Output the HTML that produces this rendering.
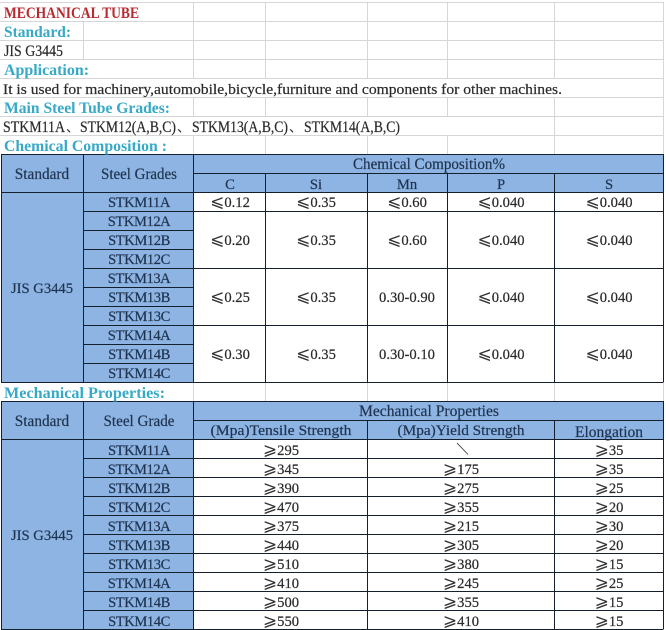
<!DOCTYPE html>
<html lang="en"><head><meta charset="utf-8"><title>Mechanical Tube</title>
<style>
html,body{margin:0;padding:0;background:#fff;width:666px;height:630px;overflow:hidden}
svg{display:block}
text{font-family:"Liberation Serif",serif;font-size:14.6px;fill:#2a2a2a;stroke:#2a2a2a;stroke-width:.2;filter:blur(.22px)}
.h{font-weight:bold;fill:#37a9c6;stroke:none;font-size:15.4px}
.r{font-weight:bold;fill:#b92a30;stroke:none;font-size:15.8px}
.c{text-anchor:middle;fill:#1f3350;stroke:#1f3350}
.k{letter-spacing:-.45px}
.w{font-size:15.3px}
.v{text-anchor:middle;fill:#2a2a2a}
.s{font-family:"DejaVu Sans",sans-serif;font-size:17px;stroke:none;fill:#333}
.j{font-family:"Noto Sans CJK SC",sans-serif;font-size:13px;stroke:none}
.g{stroke:#d6d6d6;stroke-width:1;fill:none}
.d{stroke:#14202e;stroke-width:1;fill:none}
</style></head><body>
<svg width="666" height="630" viewBox="0 0 666 630" xmlns="http://www.w3.org/2000/svg">
<rect width="666" height="630" fill="#fff"/>
<!-- light grid -->
<path class="g" d="M0 2.5H663M0 21.5H663M0 40.5H663M0 59.5H663M0 78.5H663M0 97.5H663M0 116.5H663M0 135.5H663
M83.5 21V59M193.5 2V78M193.5 97V116M193.5 135V154M265.5 2V78M265.5 97V116M265.5 135V154M367.5 2V78M367.5 97V116M367.5 135V154M447.5 2V78M447.5 97V116M447.5 135V154M554.5 2V78M554.5 97V154M663.5 2V154
M193.5 383V401M265.5 383V401M367.5 383V401M447.5 383V401M554.5 383V401M663.5 383V401"/>
<!-- fills -->
<rect x="1" y="154" width="662" height="38" fill="#8db4e2"/>
<rect x="1" y="192" width="192" height="190" fill="#8db4e2"/>
<rect x="1" y="401" width="662" height="38.5" fill="#8db4e2"/>
<rect x="1" y="439" width="192" height="190" fill="#8db4e2"/>
<!-- dark lines: chemical -->
<path class="d" d="M1 154.5H663.5M193 173.5H663.5M1 192.5H663.5M83 211.5H663.5M83 230.5H193M83 249.5H193M83 268.5H663.5M83 287.5H193M83 306.5H193M83 325.5H663.5M83 344.5H193M83 363.5H193M1 382.5H663.5
M1.5 154V382M83.5 154V382M193.5 154V382M265.5 173V382M367.5 173V382M447.5 173V382M554.5 173V382M663.5 154V382"/>
<!-- dark lines: mechanical -->
<path class="d" d="M1 401.5H663.5M193 420.5H663.5M1 439.5H663.5M83 458.5H663.5M83 477.5H663.5M83 496.5H663.5M83 515.5H663.5M83 534.5H663.5M83 553.5H663.5M83 572.5H663.5M83 591.5H663.5M83 610.5H663.5M1 629.5H663.5
M1.5 401V629M83.5 401V629M193.5 401V629M367.5 420V629M554.5 420V629M663.5 401V629"/>
<path d="M457 443L468 454.5" stroke="#333" stroke-width=".9" fill="none"/>
<!-- headings -->
<text class="r" x="4" y="18" textLength="135" lengthAdjust="spacingAndGlyphs">MECHANICAL TUBE</text>
<text class="h" x="4" y="37" textLength="67" lengthAdjust="spacingAndGlyphs">Standard:</text>
<text class="w" x="4" y="56" textLength="59" lengthAdjust="spacingAndGlyphs">JIS G3445</text>
<text class="h" x="4" y="75" textLength="85" lengthAdjust="spacingAndGlyphs">Application:</text>
<text x="3" y="94" textLength="559" lengthAdjust="spacingAndGlyphs">It is used for machinery,automobile,bicycle,furniture and components for other machines.</text>
<text class="h" x="4" y="113" textLength="166" lengthAdjust="spacingAndGlyphs">Main Steel Tube Grades:</text>
<text class="w" y="132"><tspan x="3" textLength="62" lengthAdjust="spacingAndGlyphs">STKM11A</tspan><tspan class="j" x="66">、</tspan><tspan x="80" textLength="96" lengthAdjust="spacingAndGlyphs">STKM12(A,B,C)</tspan><tspan class="j" x="177">、</tspan><tspan x="192" textLength="96" lengthAdjust="spacingAndGlyphs">STKM13(A,B,C)</tspan><tspan class="j" x="289">、</tspan><tspan x="304" textLength="96" lengthAdjust="spacingAndGlyphs">STKM14(A,B,C)</tspan></text>
<text class="h" x="4" y="151" textLength="163" lengthAdjust="spacingAndGlyphs">Chemical Composition :</text>
<text class="h" x="4" y="398" textLength="161" lengthAdjust="spacingAndGlyphs">Mechanical Properties:</text>
<!-- chemical headers -->
<text class="c w" x="42" y="179">Standard</text>
<text class="c w" x="139" y="179" textLength="76" lengthAdjust="spacingAndGlyphs">Steel Grades</text>
<text class="c w" x="429" y="169" textLength="152" lengthAdjust="spacingAndGlyphs">Chemical Composition%</text>
<text class="c" x="230" y="189">C</text>
<text class="c" x="316" y="189">Si</text>
<text class="c" x="407" y="189">Mn</text>
<text class="c" x="501" y="189">P</text>
<text class="c" x="609" y="189">S</text>
<text class="c" x="42" y="293">JIS G3445</text>
<!-- chemical grades -->
<text class="c k" x="139" y="207">STKM11A</text>
<text class="c k" x="139" y="226">STKM12A</text>
<text class="c k" x="139" y="245">STKM12B</text>
<text class="c k" x="139" y="264">STKM12C</text>
<text class="c k" x="139" y="283">STKM13A</text>
<text class="c k" x="139" y="302">STKM13B</text>
<text class="c k" x="139" y="321">STKM13C</text>
<text class="c k" x="139" y="340">STKM14A</text>
<text class="c k" x="139" y="359">STKM14B</text>
<text class="c k" x="139" y="378">STKM14C</text>
<!-- chemical values -->
<text class="v" x="230" y="207"><tspan class="s">⩽</tspan>0.12</text>
<text class="v" x="316" y="207"><tspan class="s">⩽</tspan>0.35</text>
<text class="v" x="407" y="207"><tspan class="s">⩽</tspan>0.60</text>
<text class="v" x="501" y="207"><tspan class="s">⩽</tspan>0.040</text>
<text class="v" x="609" y="207"><tspan class="s">⩽</tspan>0.040</text>
<text class="v" x="230" y="245"><tspan class="s">⩽</tspan>0.20</text>
<text class="v" x="316" y="245"><tspan class="s">⩽</tspan>0.35</text>
<text class="v" x="407" y="245"><tspan class="s">⩽</tspan>0.60</text>
<text class="v" x="501" y="245"><tspan class="s">⩽</tspan>0.040</text>
<text class="v" x="609" y="245"><tspan class="s">⩽</tspan>0.040</text>
<text class="v" x="230" y="302"><tspan class="s">⩽</tspan>0.25</text>
<text class="v" x="316" y="302"><tspan class="s">⩽</tspan>0.35</text>
<text class="v" x="407" y="302">0.30-0.90</text>
<text class="v" x="501" y="302"><tspan class="s">⩽</tspan>0.040</text>
<text class="v" x="609" y="302"><tspan class="s">⩽</tspan>0.040</text>
<text class="v" x="230" y="359"><tspan class="s">⩽</tspan>0.30</text>
<text class="v" x="316" y="359"><tspan class="s">⩽</tspan>0.35</text>
<text class="v" x="407" y="359">0.30-0.10</text>
<text class="v" x="501" y="359"><tspan class="s">⩽</tspan>0.040</text>
<text class="v" x="609" y="359"><tspan class="s">⩽</tspan>0.040</text>
<!-- mechanical headers -->
<text class="c w" x="42" y="426">Standard</text>
<text class="c w" x="139" y="426" textLength="71" lengthAdjust="spacingAndGlyphs">Steel Grade</text>
<text class="c w" x="429" y="416" textLength="140" lengthAdjust="spacingAndGlyphs">Mechanical Properties</text>
<text class="c" x="281" y="435" textLength="141" lengthAdjust="spacingAndGlyphs">(Mpa)Tensile Strength</text>
<text class="c" x="461" y="435" textLength="127" lengthAdjust="spacingAndGlyphs">(Mpa)Yield Strength</text>
<text class="c w" x="609" y="437" textLength="68" lengthAdjust="spacingAndGlyphs">Elongation</text>
<text class="c" x="42" y="540">JIS G3445</text>
<!-- mechanical grades -->
<text class="c k" x="139" y="455">STKM11A</text>
<text class="c k" x="139" y="474">STKM12A</text>
<text class="c k" x="139" y="493">STKM12B</text>
<text class="c k" x="139" y="512">STKM12C</text>
<text class="c k" x="139" y="531">STKM13A</text>
<text class="c k" x="139" y="550">STKM13B</text>
<text class="c k" x="139" y="569">STKM13C</text>
<text class="c k" x="139" y="588">STKM14A</text>
<text class="c k" x="139" y="607">STKM14B</text>
<text class="c k" x="139" y="626">STKM14C</text>
<!-- mechanical values -->
<text class="v" x="281" y="455"><tspan class="s">⩾</tspan>295</text>
<text class="v" x="609" y="455"><tspan class="s">⩾</tspan>35</text>
<text class="v" x="281" y="474"><tspan class="s">⩾</tspan>345</text>
<text class="v" x="461" y="474"><tspan class="s">⩾</tspan>175</text>
<text class="v" x="609" y="474"><tspan class="s">⩾</tspan>35</text>
<text class="v" x="281" y="493"><tspan class="s">⩾</tspan>390</text>
<text class="v" x="461" y="493"><tspan class="s">⩾</tspan>275</text>
<text class="v" x="609" y="493"><tspan class="s">⩾</tspan>25</text>
<text class="v" x="281" y="512"><tspan class="s">⩾</tspan>470</text>
<text class="v" x="461" y="512"><tspan class="s">⩾</tspan>355</text>
<text class="v" x="609" y="512"><tspan class="s">⩾</tspan>20</text>
<text class="v" x="281" y="531"><tspan class="s">⩾</tspan>375</text>
<text class="v" x="461" y="531"><tspan class="s">⩾</tspan>215</text>
<text class="v" x="609" y="531"><tspan class="s">⩾</tspan>30</text>
<text class="v" x="281" y="550"><tspan class="s">⩾</tspan>440</text>
<text class="v" x="461" y="550"><tspan class="s">⩾</tspan>305</text>
<text class="v" x="609" y="550"><tspan class="s">⩾</tspan>20</text>
<text class="v" x="281" y="569"><tspan class="s">⩾</tspan>510</text>
<text class="v" x="461" y="569"><tspan class="s">⩾</tspan>380</text>
<text class="v" x="609" y="569"><tspan class="s">⩾</tspan>15</text>
<text class="v" x="281" y="588"><tspan class="s">⩾</tspan>410</text>
<text class="v" x="461" y="588"><tspan class="s">⩾</tspan>245</text>
<text class="v" x="609" y="588"><tspan class="s">⩾</tspan>25</text>
<text class="v" x="281" y="607"><tspan class="s">⩾</tspan>500</text>
<text class="v" x="461" y="607"><tspan class="s">⩾</tspan>355</text>
<text class="v" x="609" y="607"><tspan class="s">⩾</tspan>15</text>
<text class="v" x="281" y="626"><tspan class="s">⩾</tspan>550</text>
<text class="v" x="461" y="626"><tspan class="s">⩾</tspan>410</text>
<text class="v" x="609" y="626"><tspan class="s">⩾</tspan>15</text>
</svg>
</body></html>
